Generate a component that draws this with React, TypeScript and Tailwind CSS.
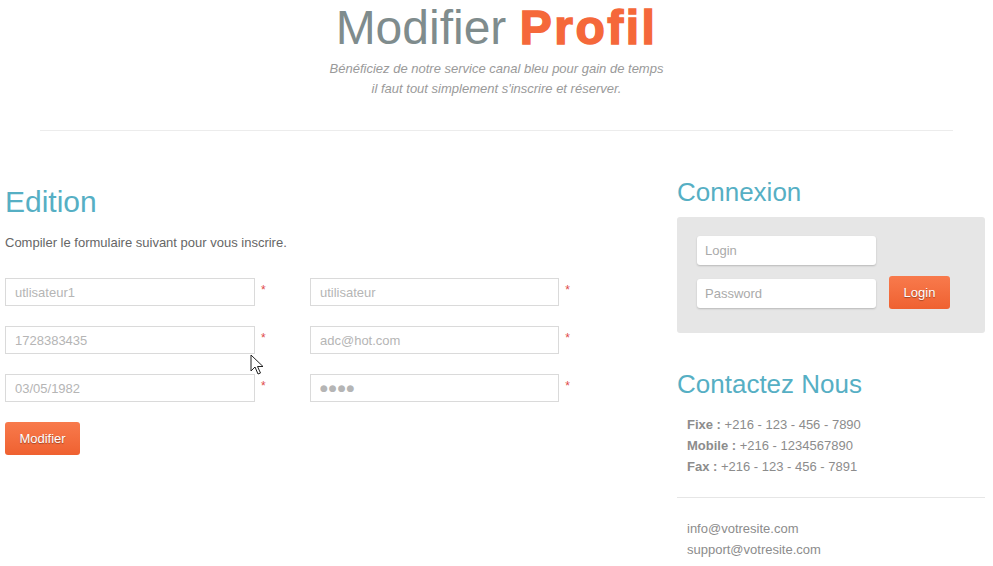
import { useState } from 'react'

const font = { fontFamily: '"Liberation Sans", Arial, sans-serif' }

function Field({ value, type = 'text', dots = false }: { value: string; type?: string; dots?: boolean }) {
  const [v, setV] = useState('')
  return (
    <div className="flex items-start">
      <input
        type={type}
        value={v}
        onChange={(e) => setV(e.target.value)}
        placeholder={value}
        className={`w-[250px] h-[28px] border border-[#dadada] bg-white px-[9px] text-[#555] placeholder:text-[#b5b5b5] outline-none ${dots ? 'text-[9px] tracking-[1px] [font-family:"DejaVu_Sans",sans-serif]' : 'text-[13px]'}`}
      />
      <span className="ml-[6px] mt-[6px] text-[12px] leading-none text-[#e04a4a]">*</span>
    </div>
  )
}

function Cursor() {
  return (
    <svg className="absolute left-[250px] top-[354px]" width="14" height="22" viewBox="0 0 14 22">
      <path d="M1 1 L1 17 L5 13 L8 20 L10.5 19 L7.5 12.5 L13 12.5 Z" fill="#fff" stroke="#222" strokeWidth="1" strokeLinejoin="round" />
    </svg>
  )
}

export default function App() {
  return (
    <div className="relative w-[993px] h-[566px] overflow-hidden bg-white" style={font}>
      {/* entête */}
      <div className="flex flex-col items-center pt-[1px]">
        <h1 className="text-[48px] leading-[53px] text-[#7f8c8d]">
          Modifier{' '}
          <span className="font-bold tracking-[2.5px] text-[#f5683a] [-webkit-text-stroke:1.5px_#f5683a]">Profil</span>
        </h1>
        <p className="mt-[5px] text-center text-[13px] leading-[20px] italic text-[#9a9a9a]">
          Bénéficiez de notre service canal bleu pour gain de temps
          <br />
          il faut tout simplement s'inscrire et réserver.
        </p>
      </div>
      <div className="mx-[40px] mt-[31px] h-px bg-[#ececec]" />

      <div className="flex">
        {/* formulaire */}
        <div className="w-[677px] pl-[5px]">
          <h2 className="mt-[54px] text-[30px] leading-[33px] text-[#56afc4]">Edition</h2>
          <p className="mt-[17px] text-[13px] leading-[16px] text-[#666]">Compiler le formulaire suivant pour vous inscrire.</p>
          <div className="mt-[27px] grid grid-cols-[305px_260px] gap-y-[20px]">
            <Field value="utlisateur1" />
            <Field value="utilisateur" />
            <Field value="1728383435" />
            <Field value="adc@hot.com" />
            <Field value="03/05/1982" />
            <Field value="●●●●" dots />
          </div>
          <button className="mt-[20px] h-[33px] w-[75px] rounded-[3px] bg-gradient-to-b from-[#f87a4c] to-[#ef6130] text-[13px] text-white [text-shadow:0_1px_1px_rgba(0,0,0,0.35)]">
            Modifier
          </button>
        </div>

        {/* colonne droite */}
        <div className="w-[308px]">
          <h2 className="mt-[46px] text-[26px] leading-[30px] text-[#56afc4]">Connexion</h2>
          <div className="mt-[10px] h-[116px] rounded-[3px] bg-[#e6e6e6] pl-[20px] pt-[19px]">
            <div className="flex items-end">
              <div className="flex flex-col gap-[14px]">
                <input placeholder="Login" className="h-[29px] w-[179px] rounded-[3px] bg-white px-[8px] text-[13px] shadow-[0_1px_2px_rgba(0,0,0,0.2)] outline-none placeholder:text-[#aaa]" />
                <input placeholder="Password" type="password" className="h-[29px] w-[179px] rounded-[3px] bg-white px-[8px] text-[13px] shadow-[0_1px_2px_rgba(0,0,0,0.2)] outline-none placeholder:text-[#aaa]" />
              </div>
              <button className="mb-[-1px] ml-[13px] h-[33px] w-[61px] rounded-[3px] bg-gradient-to-b from-[#f87a4c] to-[#ef6130] text-[13px] text-white [text-shadow:0_1px_1px_rgba(0,0,0,0.35)]">
                Login
              </button>
            </div>
          </div>

          <h2 className="mt-[36px] text-[26px] leading-[30px] text-[#56afc4]">Contactez Nous</h2>
          <div className="mt-[15px] pl-[10px] text-[13px] leading-[21px] text-[#8c8c8c]">
            <p><b>Fixe :</b> +216 - 123 - 456 - 7890</p>
            <p><b>Mobile :</b> +216 - 1234567890</p>
            <p><b>Fax :</b> +216 - 123 - 456 - 7891</p>
          </div>
          <div className="mt-[20px] h-px bg-[#e6e6e6]" />
          <div className="mt-[20px] pl-[10px] text-[13px] leading-[21px] text-[#8c8c8c]">
            <p>info@votresite.com</p>
            <p>support@votresite.com</p>
          </div>
        </div>
      </div>
      <Cursor />
    </div>
  )
}
